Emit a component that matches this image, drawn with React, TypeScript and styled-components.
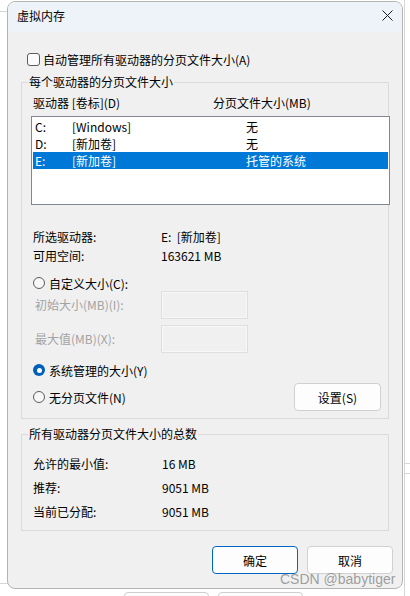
import React from "react";
import styled, { createGlobalStyle, css } from "styled-components";

const Global = createGlobalStyle`
  html, body { margin: 0; padding: 0; background: #ffffff; }
  body { font-family: "Noto Sans CJK SC", "Noto Sans", sans-serif; font-size: 12px; color: #000; }
  * { box-sizing: border-box; }
`;

const Desktop = styled.div`
  position: relative;
  width: 410px;
  height: 596px;
  overflow: hidden;
  background: #ffffff;
`;

const BgLine = styled.div<{ $v?: boolean }>`
  position: absolute;
  background: #d6d6d6;
  ${(p) => (p.$v ? css`width: 1px;` : css`height: 1px;`)}
`;

const BgButton = styled.div`
  position: absolute;
  top: 592px;
  width: 85px;
  height: 20px;
  border: 1px solid #cfcfcf;
  border-radius: 4px;
  background: #fdfdfd;
`;

const Dialog = styled.div`
  position: absolute;
  left: 7px;
  top: 1px;
  width: 396px;
  height: 588px;
  border: 1px solid #b4b4b4;
  border-radius: 8px;
  overflow: hidden;
  background: #f0f0f0;
  display: flex;
  flex-direction: column;
`;

const TitleBar = styled.div`
  height: 30px;
  flex: none;
  background: #eef3fa;
  display: flex;
  align-items: center;
  justify-content: space-between;
  padding: 0 9px 3px 9px;
  font-size: 12px;
`;

const CloseIcon = styled.svg`
  width: 11px;
  height: 11px;
  margin-right: 0;
`;

const Body = styled.div`
  flex: 1;
  display: flex;
  flex-direction: column;
  padding: 0 9px 0 13px;
`;

const CheckRow = styled.label`
  display: flex;
  align-items: center;
  height: 16px;
  margin-top: 19px;
  padding-left: 6px;
  gap: 3px;
`;

const CheckBox = styled.span`
  width: 13px;
  height: 13px;
  border: 1px solid #5c5c5c;
  border-radius: 3px;
  background: #fbfbfb;
`;

const Group = styled.fieldset<{ $top: number }>`
  width: 368px;
  margin: ${(p) => p.$top}px 0 0 0;
  border: 1px solid #dadada;
  padding: 0;
  min-width: 0;
`;

const Legend = styled.legend`
  margin-left: 6px;
  padding: 0 1px;
  line-height: 16px;
  font-size: 12px;
`;

const GroupInner = styled.div<{ $pt: number; $pb: number }>`
  padding: ${(p) => p.$pt}px 0 ${(p) => p.$pb}px 10px;
  display: flex;
  flex-direction: column;
`;

const HeaderRow = styled.div`
  display: grid;
  grid-template-columns: 180px 1fr;
  line-height: 16px;
  padding-left: 1px;
`;

const ListBox = styled.div`
  width: 359px;
  height: 89px;
  margin: 5px 0 0 -1px;
  border: 1px solid #828790;
  background: #ffffff;
  padding: 1px;
`;

const ListRow = styled.div<{ $selected?: boolean }>`
  display: grid;
  grid-template-columns: 37px 174px 1fr;
  height: 17px;
  line-height: 17px;
  padding-left: 2px;
  background: ${(p) => (p.$selected ? "#0078d7" : "transparent")};
  color: ${(p) => (p.$selected ? "#ffffff" : "#000000")};
`;

const InfoRow = styled.div<{ $col: number; $h: number; $mt?: number }>`
  display: grid;
  grid-template-columns: ${(p) => p.$col}px 1fr;
  height: ${(p) => p.$h}px;
  line-height: ${(p) => p.$h}px;
  margin-top: ${(p) => p.$mt ?? 0}px;
  padding-left: 1px;
`;

const RadioRow = styled.div<{ $mt: number; $h?: number }>`
  display: flex;
  align-items: center;
  justify-content: space-between;
  height: ${(p) => p.$h ?? 16}px;
  margin-top: ${(p) => p.$mt}px;
  padding-right: 7px;
`;

const RadioLabel = styled.label`
  display: flex;
  align-items: center;
  gap: 4px;
  padding-left: 1px;
`;

const Radio = styled.span<{ $checked?: boolean }>`
  width: 12px;
  height: 12px;
  border-radius: 50%;
  display: flex;
  align-items: center;
  justify-content: center;
  ${(p) =>
    p.$checked
      ? css`
          background: #005fb8;
          &::after {
            content: "";
            width: 5px;
            height: 5px;
            border-radius: 50%;
            background: #ffffff;
          }
        `
      : css`
          border: 1px solid #5c5c5c;
          background: #f7f7f7;
        `}
`;

const FieldRow = styled.div<{ $mt: number }>`
  display: grid;
  grid-template-columns: 129px 87px;
  align-items: center;
  margin-top: ${(p) => p.$mt}px;
`;

const DisabledLabel = styled.span`
  color: #a3a3a3;
  padding-left: 3px;
  line-height: 16px;
`;

const DisabledInput = styled.div`
  height: 28px;
  border: 1px solid #dedede;
  background: #f0f0f0;
  box-shadow: inset 0 0 0 1px #f7f7f7;
`;

const Button = styled.button<{ $primary?: boolean; $w?: number }>`
  width: ${(p) => p.$w ?? 86}px;
  height: 28px;
  border: 1px solid ${(p) => (p.$primary ? "#0067c0" : "#d0d0d0")};
  border-radius: 4px;
  background: #fdfdfd;
  font-family: inherit;
  font-size: 12px;
  color: #000;
  padding: 0;
`;

const ButtonBar = styled.div`
  display: flex;
  justify-content: flex-end;
  gap: 9px;
  margin-top: 15px;
`;

const Watermark = styled.div`
  position: absolute;
  left: 280px;
  top: 570px;
  font-family: "Liberation Sans", Arial, sans-serif;
  font-size: 14px;
  line-height: 18px;
  color: rgba(120, 120, 120, 0.7);
  pointer-events: none;
`;

export default function App() {
  return (
    <>
      <Global />
      <Desktop>
        <BgLine style={{ left: 0, top: 11, width: 8 }} />
        <BgLine $v style={{ left: 404, top: 0, height: 596 }} />
        <BgLine style={{ left: 404, top: 463, width: 6 }} />
        <BgLine style={{ left: 404, top: 473, width: 6 }} />
        <BgLine style={{ left: 0, top: 583, width: 8 }} />
        <BgButton style={{ left: 124 }} />
        <BgButton style={{ left: 218 }} />
        <Dialog>
          <TitleBar>
            <span>虚拟内存</span>
            <CloseIcon viewBox="0 0 11 11">
              <path d="M0.5 0.5 L10.5 10.5 M10.5 0.5 L0.5 10.5" stroke="#1a1a1a" strokeWidth="1" fill="none" />
            </CloseIcon>
          </TitleBar>
          <Body>
            <CheckRow>
              <CheckBox />
              <span>自动管理所有驱动器的分页文件大小(A)</span>
            </CheckRow>
            <Group $top={7}>
              <Legend>每个驱动器的分页文件大小</Legend>
              <GroupInner $pt={5} $pb={7}>
                <HeaderRow>
                  <span>驱动器 [卷标](D)</span>
                  <span>分页文件大小(MB)</span>
                </HeaderRow>
                <ListBox>
                  <ListRow>
                    <span>C:</span>
                    <span>[Windows]</span>
                    <span>无</span>
                  </ListRow>
                  <ListRow>
                    <span>D:</span>
                    <span>[新加卷]</span>
                    <span>无</span>
                  </ListRow>
                  <ListRow $selected>
                    <span>E:</span>
                    <span>[新加卷]</span>
                    <span>托管的系统</span>
                  </ListRow>
                </ListBox>
                <InfoRow $col={128} $h={19} $mt={22}>
                  <span>所选驱动器:</span>
                  <span>E:&nbsp;&nbsp;[新加卷]</span>
                </InfoRow>
                <InfoRow $col={128} $h={19}>
                  <span>可用空间:</span>
                  <span>163621 MB</span>
                </InfoRow>
                <RadioRow $mt={10}>
                  <RadioLabel>
                    <Radio />
                    <span>自定义大小(C):</span>
                  </RadioLabel>
                </RadioRow>
                <FieldRow $mt={0}>
                  <DisabledLabel>初始大小(MB)(I):</DisabledLabel>
                  <DisabledInput />
                </FieldRow>
                <FieldRow $mt={6}>
                  <DisabledLabel>最大值(MB)(X):</DisabledLabel>
                  <DisabledInput />
                </FieldRow>
                <RadioRow $mt={9}>
                  <RadioLabel>
                    <Radio $checked />
                    <span>系统管理的大小(Y)</span>
                  </RadioLabel>
                </RadioRow>
                <RadioRow $mt={5} $h={28}>
                  <RadioLabel>
                    <Radio />
                    <span>无分页文件(N)</span>
                  </RadioLabel>
                  <Button type="button" $w={87}>设置(S)</Button>
                </RadioRow>
              </GroupInner>
            </Group>
            <Group $top={7}>
              <Legend>所有驱动器分页文件大小的总数</Legend>
              <GroupInner $pt={10} $pb={6}>
                <InfoRow $col={129} $h={24}>
                  <span>允许的最小值:</span>
                  <span>16 MB</span>
                </InfoRow>
                <InfoRow $col={129} $h={24}>
                  <span>推荐:</span>
                  <span>9051 MB</span>
                </InfoRow>
                <InfoRow $col={129} $h={24}>
                  <span>当前已分配:</span>
                  <span>9051 MB</span>
                </InfoRow>
              </GroupInner>
            </Group>
            <ButtonBar>
              <Button type="button" $primary>确定</Button>
              <Button type="button">取消</Button>
            </ButtonBar>
          </Body>
        </Dialog>
        <Watermark>CSDN @babytiger</Watermark>
      </Desktop>
    </>
  );
}
